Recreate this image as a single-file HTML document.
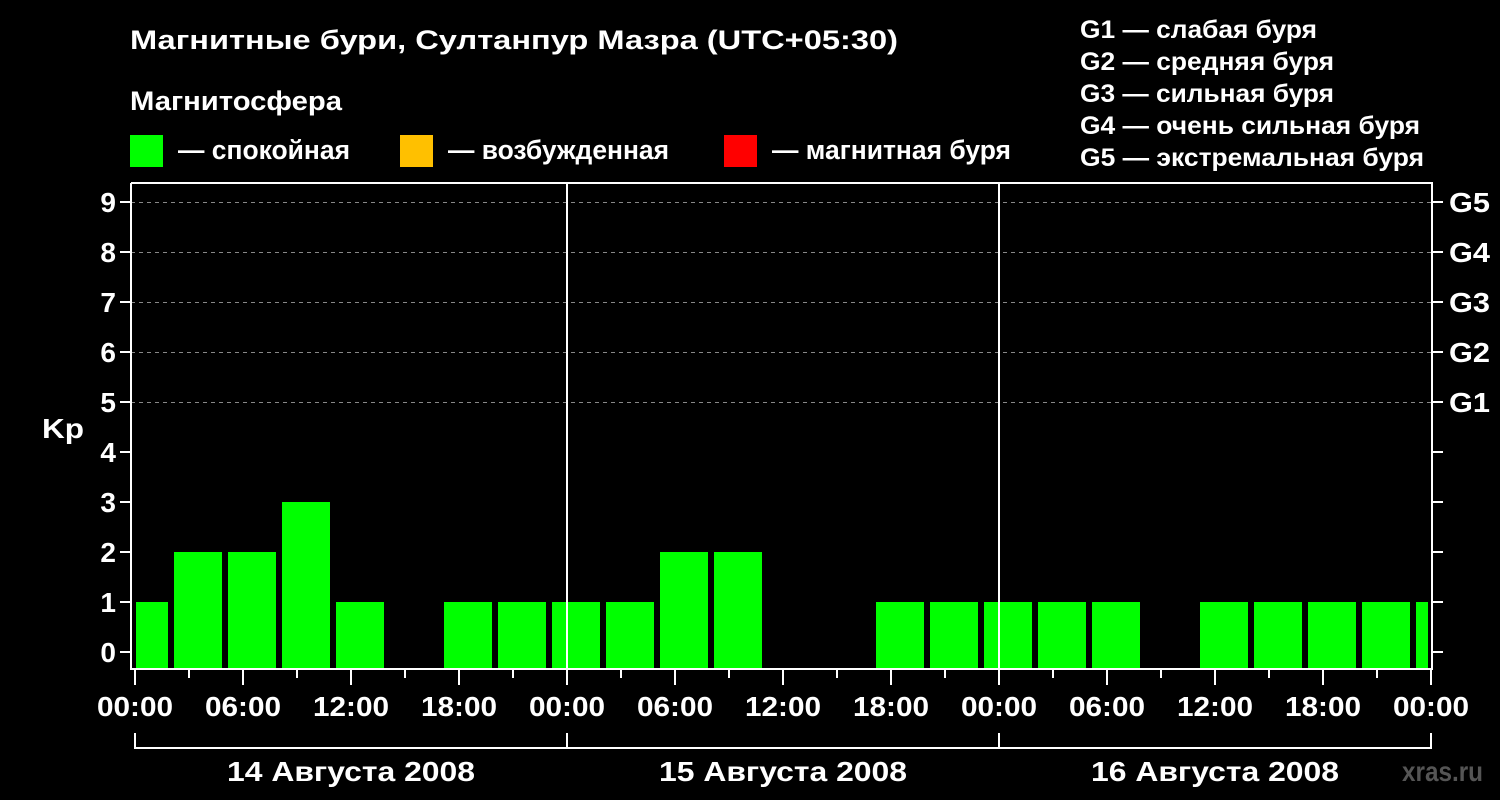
<!DOCTYPE html>
<html><head><meta charset="utf-8"><style>
html,body{margin:0;padding:0;background:#000;}
svg{display:block}
text{font-family:"Liberation Sans",Arial,sans-serif;font-weight:bold;fill:#fff;}
</style></head><body>
<svg width="1500" height="800" viewBox="0 0 1500 800" xmlns="http://www.w3.org/2000/svg">
<rect width="1500" height="800" fill="#000"/>
<g font-size="27">
<text x="130" y="49" textLength="768" lengthAdjust="spacingAndGlyphs">Магнитные бури, Султанпур Мазра (UTC+05:30)</text>
<text x="130" y="110" textLength="212" lengthAdjust="spacingAndGlyphs">Магнитосфера</text>
<text x="178" y="159" textLength="172" lengthAdjust="spacingAndGlyphs">— спокойная</text>
<text x="448" y="159" textLength="221" lengthAdjust="spacingAndGlyphs">— возбужденная</text>
<text x="772" y="159" textLength="239" lengthAdjust="spacingAndGlyphs">— магнитная буря</text>
</g>
<g font-size="25">
<text x="1080" y="38" textLength="237" lengthAdjust="spacingAndGlyphs">G1 — слабая буря</text>
<text x="1080" y="70" textLength="254" lengthAdjust="spacingAndGlyphs">G2 — средняя буря</text>
<text x="1080" y="102" textLength="254" lengthAdjust="spacingAndGlyphs">G3 — сильная буря</text>
<text x="1080" y="134" textLength="340" lengthAdjust="spacingAndGlyphs">G4 — очень сильная буря</text>
<text x="1080" y="166" textLength="344" lengthAdjust="spacingAndGlyphs">G5 — экстремальная буря</text>
</g>
<rect x="130" y="135" width="33" height="32" fill="#00ff00"/>
<rect x="400" y="135" width="33" height="32" fill="#ffc000"/>
<rect x="724" y="135" width="33" height="32" fill="#ff0000"/>
<g stroke="#888" stroke-width="1" stroke-dasharray="4,4">
<line x1="131" y1="202.5" x2="1432" y2="202.5"/>
<line x1="131" y1="252.5" x2="1432" y2="252.5"/>
<line x1="131" y1="302.5" x2="1432" y2="302.5"/>
<line x1="131" y1="352.5" x2="1432" y2="352.5"/>
<line x1="131" y1="402.5" x2="1432" y2="402.5"/>
</g>
<g fill="#00ff00">
<rect x="136" y="602" width="32" height="66"/>
<rect x="174" y="552" width="48" height="116"/>
<rect x="228" y="552" width="48" height="116"/>
<rect x="282" y="502" width="48" height="166"/>
<rect x="336" y="602" width="48" height="66"/>
<rect x="444" y="602" width="48" height="66"/>
<rect x="498" y="602" width="48" height="66"/>
<rect x="552" y="602" width="48" height="66"/>
<rect x="606" y="602" width="48" height="66"/>
<rect x="660" y="552" width="48" height="116"/>
<rect x="714" y="552" width="48" height="116"/>
<rect x="876" y="602" width="48" height="66"/>
<rect x="930" y="602" width="48" height="66"/>
<rect x="984" y="602" width="48" height="66"/>
<rect x="1038" y="602" width="48" height="66"/>
<rect x="1092" y="602" width="48" height="66"/>
<rect x="1200" y="602" width="48" height="66"/>
<rect x="1254" y="602" width="48" height="66"/>
<rect x="1308" y="602" width="48" height="66"/>
<rect x="1362" y="602" width="48" height="66"/>
<rect x="1416" y="602" width="12" height="66"/>
</g>
<g stroke="#fff" stroke-width="2" fill="none">
<polyline points="131,183 131,669 1432,669 1432,183 131,183"/>
<line x1="567" y1="183" x2="567" y2="668"/>
<line x1="999" y1="183" x2="999" y2="668"/>
</g>
<g stroke="#fff" stroke-width="2">
<line x1="120" y1="202" x2="131" y2="202"/><line x1="1432" y1="202" x2="1443" y2="202"/>
<line x1="120" y1="252" x2="131" y2="252"/><line x1="1432" y1="252" x2="1443" y2="252"/>
<line x1="120" y1="302" x2="131" y2="302"/><line x1="1432" y1="302" x2="1443" y2="302"/>
<line x1="120" y1="352" x2="131" y2="352"/><line x1="1432" y1="352" x2="1443" y2="352"/>
<line x1="120" y1="402" x2="131" y2="402"/><line x1="1432" y1="402" x2="1443" y2="402"/>
<line x1="120" y1="452" x2="131" y2="452"/><line x1="1432" y1="452" x2="1443" y2="452"/>
<line x1="120" y1="502" x2="131" y2="502"/><line x1="1432" y1="502" x2="1443" y2="502"/>
<line x1="120" y1="552" x2="131" y2="552"/><line x1="1432" y1="552" x2="1443" y2="552"/>
<line x1="120" y1="602" x2="131" y2="602"/><line x1="1432" y1="602" x2="1443" y2="602"/>
<line x1="120" y1="652" x2="131" y2="652"/><line x1="1432" y1="652" x2="1443" y2="652"/>
</g>
<g font-size="28" text-anchor="end">
<text x="116" y="212">9</text><text x="116" y="262">8</text><text x="116" y="312">7</text>
<text x="116" y="362">6</text><text x="116" y="412">5</text><text x="116" y="462">4</text>
<text x="116" y="512">3</text><text x="116" y="562">2</text><text x="116" y="612">1</text>
<text x="116" y="662">0</text>
</g>
<text x="42" y="438" font-size="28" textLength="42" lengthAdjust="spacingAndGlyphs">Kp</text>
<g font-size="28">
<text x="1449" y="212" textLength="41" lengthAdjust="spacingAndGlyphs">G5</text><text x="1449" y="262" textLength="41" lengthAdjust="spacingAndGlyphs">G4</text><text x="1449" y="312" textLength="41" lengthAdjust="spacingAndGlyphs">G3</text>
<text x="1449" y="362" textLength="41" lengthAdjust="spacingAndGlyphs">G2</text><text x="1449" y="412" textLength="41" lengthAdjust="spacingAndGlyphs">G1</text>
</g>
<g stroke="#fff" stroke-width="2">
<line x1="135" y1="670" x2="135" y2="685"/><line x1="189" y1="670" x2="189" y2="678"/>
<line x1="243" y1="670" x2="243" y2="685"/><line x1="297" y1="670" x2="297" y2="678"/>
<line x1="351" y1="670" x2="351" y2="685"/><line x1="405" y1="670" x2="405" y2="678"/>
<line x1="459" y1="670" x2="459" y2="685"/><line x1="513" y1="670" x2="513" y2="678"/>
<line x1="567" y1="670" x2="567" y2="685"/><line x1="621" y1="670" x2="621" y2="678"/>
<line x1="675" y1="670" x2="675" y2="685"/><line x1="729" y1="670" x2="729" y2="678"/>
<line x1="783" y1="670" x2="783" y2="685"/><line x1="837" y1="670" x2="837" y2="678"/>
<line x1="891" y1="670" x2="891" y2="685"/><line x1="945" y1="670" x2="945" y2="678"/>
<line x1="999" y1="670" x2="999" y2="685"/><line x1="1053" y1="670" x2="1053" y2="678"/>
<line x1="1107" y1="670" x2="1107" y2="685"/><line x1="1161" y1="670" x2="1161" y2="678"/>
<line x1="1215" y1="670" x2="1215" y2="685"/><line x1="1269" y1="670" x2="1269" y2="678"/>
<line x1="1323" y1="670" x2="1323" y2="685"/><line x1="1377" y1="670" x2="1377" y2="678"/>
<line x1="1431" y1="670" x2="1431" y2="685"/>
<polyline fill="none" points="135,733 135,748 1431,748 1431,733"/>
<line x1="567" y1="733" x2="567" y2="748"/>
<line x1="999" y1="733" x2="999" y2="748"/>
</g>
<g font-size="28" text-anchor="middle">
<text x="135" y="716" textLength="76" lengthAdjust="spacingAndGlyphs">00:00</text><text x="243" y="716" textLength="76" lengthAdjust="spacingAndGlyphs">06:00</text><text x="351" y="716" textLength="76" lengthAdjust="spacingAndGlyphs">12:00</text>
<text x="459" y="716" textLength="76" lengthAdjust="spacingAndGlyphs">18:00</text><text x="567" y="716" textLength="76" lengthAdjust="spacingAndGlyphs">00:00</text><text x="675" y="716" textLength="76" lengthAdjust="spacingAndGlyphs">06:00</text>
<text x="783" y="716" textLength="76" lengthAdjust="spacingAndGlyphs">12:00</text><text x="891" y="716" textLength="76" lengthAdjust="spacingAndGlyphs">18:00</text><text x="999" y="716" textLength="76" lengthAdjust="spacingAndGlyphs">00:00</text>
<text x="1107" y="716" textLength="76" lengthAdjust="spacingAndGlyphs">06:00</text><text x="1215" y="716" textLength="76" lengthAdjust="spacingAndGlyphs">12:00</text><text x="1323" y="716" textLength="76" lengthAdjust="spacingAndGlyphs">18:00</text>
<text x="1431" y="716" textLength="76" lengthAdjust="spacingAndGlyphs">00:00</text>
<text x="351" y="781" textLength="248" lengthAdjust="spacingAndGlyphs">14 Августа 2008</text>
<text x="783" y="781" textLength="248" lengthAdjust="spacingAndGlyphs">15 Августа 2008</text>
<text x="1215" y="781" textLength="248" lengthAdjust="spacingAndGlyphs">16 Августа 2008</text>
</g>
<text x="1402" y="781" font-size="28" style="fill:#555" textLength="81" lengthAdjust="spacingAndGlyphs">xras.ru</text>
</svg>
</body></html>
